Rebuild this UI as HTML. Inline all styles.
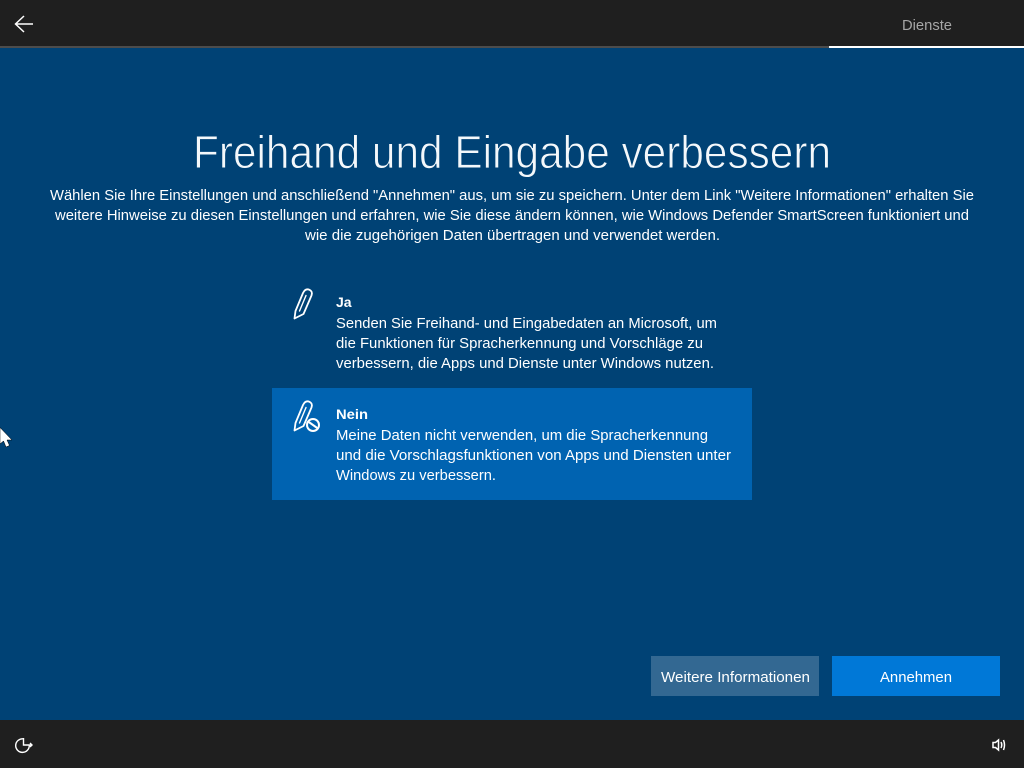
<!DOCTYPE html>
<html lang="de">
<head>
<meta charset="utf-8">
<title>Freihand und Eingabe verbessern</title>
<style>
html,body{margin:0;padding:0;width:1024px;height:768px;overflow:hidden;background:#004275}
svg{display:block;position:absolute;left:0;top:0}
text{font-family:"Liberation Sans",sans-serif;fill:#fff;font-size:15px}
.title{font-size:46px;fill:#f4f8fb;stroke:#004275;stroke-width:0.9px;paint-order:normal}
</style>
</head>
<body>
<svg width="1024" height="768" viewBox="0 0 1024 768" xmlns="http://www.w3.org/2000/svg">
<rect width="1024" height="768" fill="#004275"/>
<!-- header -->
<rect width="1024" height="46" fill="#1f1f1f"/>
<rect y="46" width="829" height="2" fill="#4c4c4c"/>
<rect x="829" y="46" width="195" height="2" fill="#fff"/>
<path d="M33 24H15.500M24 16L15.500 24L24 32" fill="none" stroke="#fff" stroke-width="1.500"/>
<text x="902" y="30" textLength="50" lengthAdjust="spacingAndGlyphs" style="fill:#a6a6a6;font-size:14.5px">Dienste</text>
<!-- heading -->
<text class="title" x="193" y="168" textLength="638" lengthAdjust="spacingAndGlyphs">Freihand und Eingabe verbessern</text>
<text x="50" y="200" textLength="924" lengthAdjust="spacingAndGlyphs">Wählen Sie Ihre Einstellungen und anschließend "Annehmen" aus, um sie zu speichern. Unter dem Link "Weitere Informationen" erhalten Sie</text>
<text x="55" y="220" textLength="914" lengthAdjust="spacingAndGlyphs">weitere Hinweise zu diesen Einstellungen und erfahren, wie Sie diese ändern können, wie Windows Defender SmartScreen funktioniert und</text>
<text x="305" y="240" textLength="415" lengthAdjust="spacingAndGlyphs">wie die zugehörigen Daten übertragen und verwendet werden.</text>
<!-- option: Ja -->
<g fill="none" stroke="#fff" stroke-width="1.800" stroke-linejoin="round" stroke-linecap="round">
<path d="M294.500 318.500L295.500 311L303 293Q305.500 288 309.500 289.800Q313 291.500 311.500 295.500L303.500 314L294.500 318.500Z"/>
<path d="M299.500 311L306 295.500" stroke-width="1.400"/>
</g>
<text x="336" y="307" style="font-size:14px;font-weight:bold">Ja</text>
<text x="336" y="328" textLength="381" lengthAdjust="spacingAndGlyphs">Senden Sie Freihand- und Eingabedaten an Microsoft, um</text>
<text x="336" y="348" textLength="367" lengthAdjust="spacingAndGlyphs">die Funktionen für Spracherkennung und Vorschläge zu</text>
<text x="336" y="368" textLength="378" lengthAdjust="spacingAndGlyphs">verbessern, die Apps und Dienste unter Windows nutzen.</text>
<!-- option: Nein -->
<rect x="272" y="388" width="480" height="112" fill="#0063b1"/>
<g fill="none" stroke="#fff" stroke-width="1.800" stroke-linejoin="round" stroke-linecap="round">
<path d="M294.500 430.500L295.500 423L303 405Q305.500 400 309.500 401.800Q313 403.500 311.500 407.500L303.500 426L294.500 430.500Z"/>
<path d="M299.500 423L306 407.500" stroke-width="1.400"/>
<circle cx="313" cy="425" r="6" stroke-width="2"/>
<path d="M309.500 422.500L316.500 427.500" stroke-width="2"/>
</g>
<text x="336" y="419" textLength="32" lengthAdjust="spacingAndGlyphs" style="font-size:14px;font-weight:bold">Nein</text>
<text x="336" y="440" textLength="372" lengthAdjust="spacingAndGlyphs">Meine Daten nicht verwenden, um die Spracherkennung</text>
<text x="336" y="460" textLength="395" lengthAdjust="spacingAndGlyphs">und die Vorschlagsfunktionen von Apps und Diensten unter</text>
<text x="336" y="480" textLength="160" lengthAdjust="spacingAndGlyphs">Windows zu verbessern.</text>
<!-- cursor -->
<path d="M0 427.500V444L3.500 441L6 447L9.500 445.500L7 440H12L0 427.500Z" fill="#fff" stroke="#000" stroke-width="0.500"/>
<!-- buttons -->
<rect x="651" y="656" width="168" height="40" fill="#336892"/>
<text x="661" y="682" textLength="149" lengthAdjust="spacingAndGlyphs">Weitere Informationen</text>
<rect x="832" y="656" width="168" height="40" fill="#0078d7"/>
<text x="880" y="682" textLength="72" lengthAdjust="spacingAndGlyphs">Annehmen</text>
<!-- footer -->
<rect y="720" width="1024" height="48" fill="#1f1f1f"/>
<g fill="none" stroke="#fff" stroke-width="1.400">
<path d="M23 738.800A6.800 6.800 0 1 0 29.300 745.500"/>
<path d="M23.500 738V745H32M30 743L32 745L30 747"/>
</g>
<g fill="none" stroke="#fff" stroke-width="1.500">
<path d="M993 742.500V747.500H995.500L998.500 750V740L995.500 742.500H993Z"/>
<path d="M1001 742Q1002.500 745 1001 748M1003.500 740Q1005.500 745 1003.500 750"/>
</g>
</svg>
</body>
</html>
